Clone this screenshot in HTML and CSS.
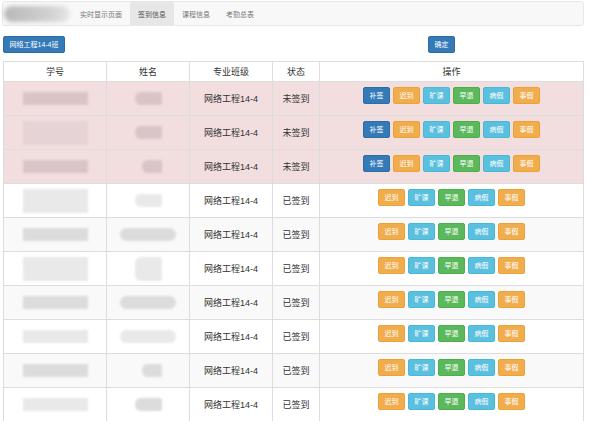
FILE: index.html
```html
<!DOCTYPE html>
<html lang="zh-CN">
<head>
    <meta charset="UTF-8">
    <meta name="viewport" content="width=device-width, initial-scale=1.0">
    <title>签到信息</title>
    <link rel="stylesheet" href="styles.css">
</head>
<body>

    <div class="page">
        <nav class="navbar">
            <div class="brand"><span class="brand-blur"></span></div>
            <ul class="nav">
                <li><a href="#">实时显示页面</a></li>
                <li class="active"><a href="#">签到信息</a></li>
                <li><a href="#">课程信息</a></li>
                <li><a href="#">考勤总表</a></li>
            </ul>
        </nav>

        <div class="toolbar">
            <button class="btn btn-primary">网络工程14-4班</button>
            <button class="btn btn-primary confirm">确定</button>
        </div>

        <table class="sign-table">
            <colgroup>
                <col class="col-id">
                <col class="col-name">
                <col class="col-class">
                <col class="col-state">
                <col>
            </colgroup>
            <thead>
                <tr><th>学号</th><th>姓名</th><th>专业班级</th><th>状态</th><th>操作</th></tr>
            </thead>
            <tbody>
                <tr class="danger">
                    <td><span class="blob blob-id pink"></span></td>
                    <td><span class="blob blob-name pink"></span></td>
                    <td>网络工程14-4</td>
                    <td>未签到</td>
                    <td>
                        <div class="actions">
                            <button class="btn btn-primary">补签</button>
                            <button class="btn btn-warning">迟到</button>
                            <button class="btn btn-info">旷课</button>
                            <button class="btn btn-success">早退</button>
                            <button class="btn btn-info">病假</button>
                            <button class="btn btn-warning">事假</button>
                        </div>
                    </td>
                </tr>
                <tr class="danger">
                    <td><span class="blob blob-id pink tall"></span></td>
                    <td><span class="blob blob-name pink"></span></td>
                    <td>网络工程14-4</td>
                    <td>未签到</td>
                    <td>
                        <div class="actions">
                            <button class="btn btn-primary">补签</button>
                            <button class="btn btn-warning">迟到</button>
                            <button class="btn btn-info">旷课</button>
                            <button class="btn btn-success">早退</button>
                            <button class="btn btn-info">病假</button>
                            <button class="btn btn-warning">事假</button>
                        </div>
                    </td>
                </tr>
                <tr class="danger">
                    <td><span class="blob blob-id pink"></span></td>
                    <td><span class="blob blob-name pink short"></span></td>
                    <td>网络工程14-4</td>
                    <td>未签到</td>
                    <td>
                        <div class="actions">
                            <button class="btn btn-primary">补签</button>
                            <button class="btn btn-warning">迟到</button>
                            <button class="btn btn-info">旷课</button>
                            <button class="btn btn-success">早退</button>
                            <button class="btn btn-info">病假</button>
                            <button class="btn btn-warning">事假</button>
                        </div>
                    </td>
                </tr>
                <tr>
                    <td><span class="blob blob-id light tall"></span></td>
                    <td><span class="blob blob-name light"></span></td>
                    <td>网络工程14-4</td>
                    <td>已签到</td>
                    <td>
                        <div class="actions">
                            <button class="btn btn-warning">迟到</button>
                            <button class="btn btn-info">旷课</button>
                            <button class="btn btn-success">早退</button>
                            <button class="btn btn-info">病假</button>
                            <button class="btn btn-warning">事假</button>
                        </div>
                    </td>
                </tr>
                <tr>
                    <td><span class="blob blob-id"></span></td>
                    <td><span class="blob blob-name wide"></span></td>
                    <td>网络工程14-4</td>
                    <td>已签到</td>
                    <td>
                        <div class="actions">
                            <button class="btn btn-warning">迟到</button>
                            <button class="btn btn-info">旷课</button>
                            <button class="btn btn-success">早退</button>
                            <button class="btn btn-info">病假</button>
                            <button class="btn btn-warning">事假</button>
                        </div>
                    </td>
                </tr>
                <tr>
                    <td><span class="blob blob-id light tall"></span></td>
                    <td><span class="blob blob-name light tall"></span></td>
                    <td>网络工程14-4</td>
                    <td>已签到</td>
                    <td>
                        <div class="actions">
                            <button class="btn btn-warning">迟到</button>
                            <button class="btn btn-info">旷课</button>
                            <button class="btn btn-success">早退</button>
                            <button class="btn btn-info">病假</button>
                            <button class="btn btn-warning">事假</button>
                        </div>
                    </td>
                </tr>
                <tr>
                    <td><span class="blob blob-id"></span></td>
                    <td><span class="blob blob-name wide"></span></td>
                    <td>网络工程14-4</td>
                    <td>已签到</td>
                    <td>
                        <div class="actions">
                            <button class="btn btn-warning">迟到</button>
                            <button class="btn btn-info">旷课</button>
                            <button class="btn btn-success">早退</button>
                            <button class="btn btn-info">病假</button>
                            <button class="btn btn-warning">事假</button>
                        </div>
                    </td>
                </tr>
                <tr>
                    <td><span class="blob blob-id light"></span></td>
                    <td><span class="blob blob-name wide light"></span></td>
                    <td>网络工程14-4</td>
                    <td>已签到</td>
                    <td>
                        <div class="actions">
                            <button class="btn btn-warning">迟到</button>
                            <button class="btn btn-info">旷课</button>
                            <button class="btn btn-success">早退</button>
                            <button class="btn btn-info">病假</button>
                            <button class="btn btn-warning">事假</button>
                        </div>
                    </td>
                </tr>
                <tr>
                    <td><span class="blob blob-id"></span></td>
                    <td><span class="blob blob-name short"></span></td>
                    <td>网络工程14-4</td>
                    <td>已签到</td>
                    <td>
                        <div class="actions">
                            <button class="btn btn-warning">迟到</button>
                            <button class="btn btn-info">旷课</button>
                            <button class="btn btn-success">早退</button>
                            <button class="btn btn-info">病假</button>
                            <button class="btn btn-warning">事假</button>
                        </div>
                    </td>
                </tr>
                <tr>
                    <td><span class="blob blob-id light"></span></td>
                    <td><span class="blob blob-name"></span></td>
                    <td>网络工程14-4</td>
                    <td>已签到</td>
                    <td>
                        <div class="actions">
                            <button class="btn btn-warning">迟到</button>
                            <button class="btn btn-info">旷课</button>
                            <button class="btn btn-success">早退</button>
                            <button class="btn btn-info">病假</button>
                            <button class="btn btn-warning">事假</button>
                        </div>
                    </td>
                </tr>
            </tbody>
        </table>
    </div>

</body>
</html>
```

FILE: styles.css
```css
* {
    box-sizing: border-box;
}

body {
    margin: 0;
    font-family: "Liberation Sans", "Noto Sans CJK SC", sans-serif;
    color: #333;
    background-color: #fff;
}

.page {
    width: 590px;
    padding: 1px 6px 0 2px;
}

/* top navbar */
.navbar {
    display: flex;
    height: 25px;
    background-color: #f8f8f8;
    border: 1px solid #e7e7e7;
    border-radius: 3px;
}

.brand {
    display: flex;
    align-items: center;
    width: 69px;
    padding-left: 1px;
}

.brand-blur {
    width: 66px;
    height: 16px;
    border-radius: 8px;
    background: linear-gradient(90deg, #b8b8b8, #c6c6c6 40%, #d2d2d2 70%, #e6e6e6);
    filter: blur(2px);
}

.nav {
    display: flex;
    list-style: none;
    margin: 0;
    padding: 0;
}

.nav a {
    display: flex;
    align-items: center;
    height: 23px;
    padding: 0 8px;
    font-size: 7px;
    color: #777;
    text-decoration: none;
}

.nav .active a {
    background-color: #e7e7e7;
    color: #555;
}

/* buttons */
.toolbar {
    display: flex;
    margin: 10px 0 8px 1px;
}

.confirm {
    margin-left: 363px;
}

.btn {
    height: 17px;
    padding: 0 5.5px;
    font-family: inherit;
    font-size: 7px;
    line-height: 15px;
    color: #fff;
    border: 1px solid transparent;
    border-radius: 2px;
    cursor: pointer;
    white-space: nowrap;
}

.btn-primary {
    background-color: #337ab7;
    border-color: #2e6da4;
}

.btn-warning {
    background-color: #f0ad4e;
    border-color: #eea236;
}

.btn-info {
    background-color: #5bc0de;
    border-color: #46b8da;
}

.btn-success {
    background-color: #5cb85c;
    border-color: #4cae4c;
}

/* table */
.sign-table {
    width: 581px;
    margin-left: 1px;
    table-layout: fixed;
    border-collapse: collapse;
    border: 1px solid #ddd;
    font-size: 9px;
}

.col-id {
    width: 103px;
}

.col-name,
.col-class {
    width: 83px;
}

.col-state {
    width: 47px;
}

.sign-table th,
.sign-table td {
    padding: 0;
    border: 1px solid #ddd;
    text-align: center;
    vertical-align: middle;
}

.sign-table th {
    height: 20px;
    font-weight: normal;
    background-color: #fff;
}

.sign-table td {
    height: 34px;
}

.sign-table tbody tr:nth-child(odd) td {
    background-color: #f9f9f9;
}

.sign-table tbody tr.danger td {
    background-color: #f2dede;
}

.actions {
    display: flex;
    justify-content: center;
    gap: 3px;
    margin-bottom: 6px;
}

/* redacted names and ids */
.blob {
    display: block;
    margin: 0 auto;
    height: 13px;
    background-color: #dcdcdc;
    filter: blur(1px);
}

.blob-id {
    width: 65px;
}

.blob-name {
    width: 27px;
    border-radius: 6px 2px 2px 6px;
}

.blob.wide {
    width: 56px;
    border-radius: 7px;
}

.blob.short {
    width: 20px;
    margin-left: 35px;
}

.blob.tall {
    height: 24px;
}

.blob.light {
    background-color: #e9e9e9;
}

.blob.pink {
    background-color: #d9c5c7;
}

.blob-id.pink.tall {
    background-color: #e6d3d5;
}
```
